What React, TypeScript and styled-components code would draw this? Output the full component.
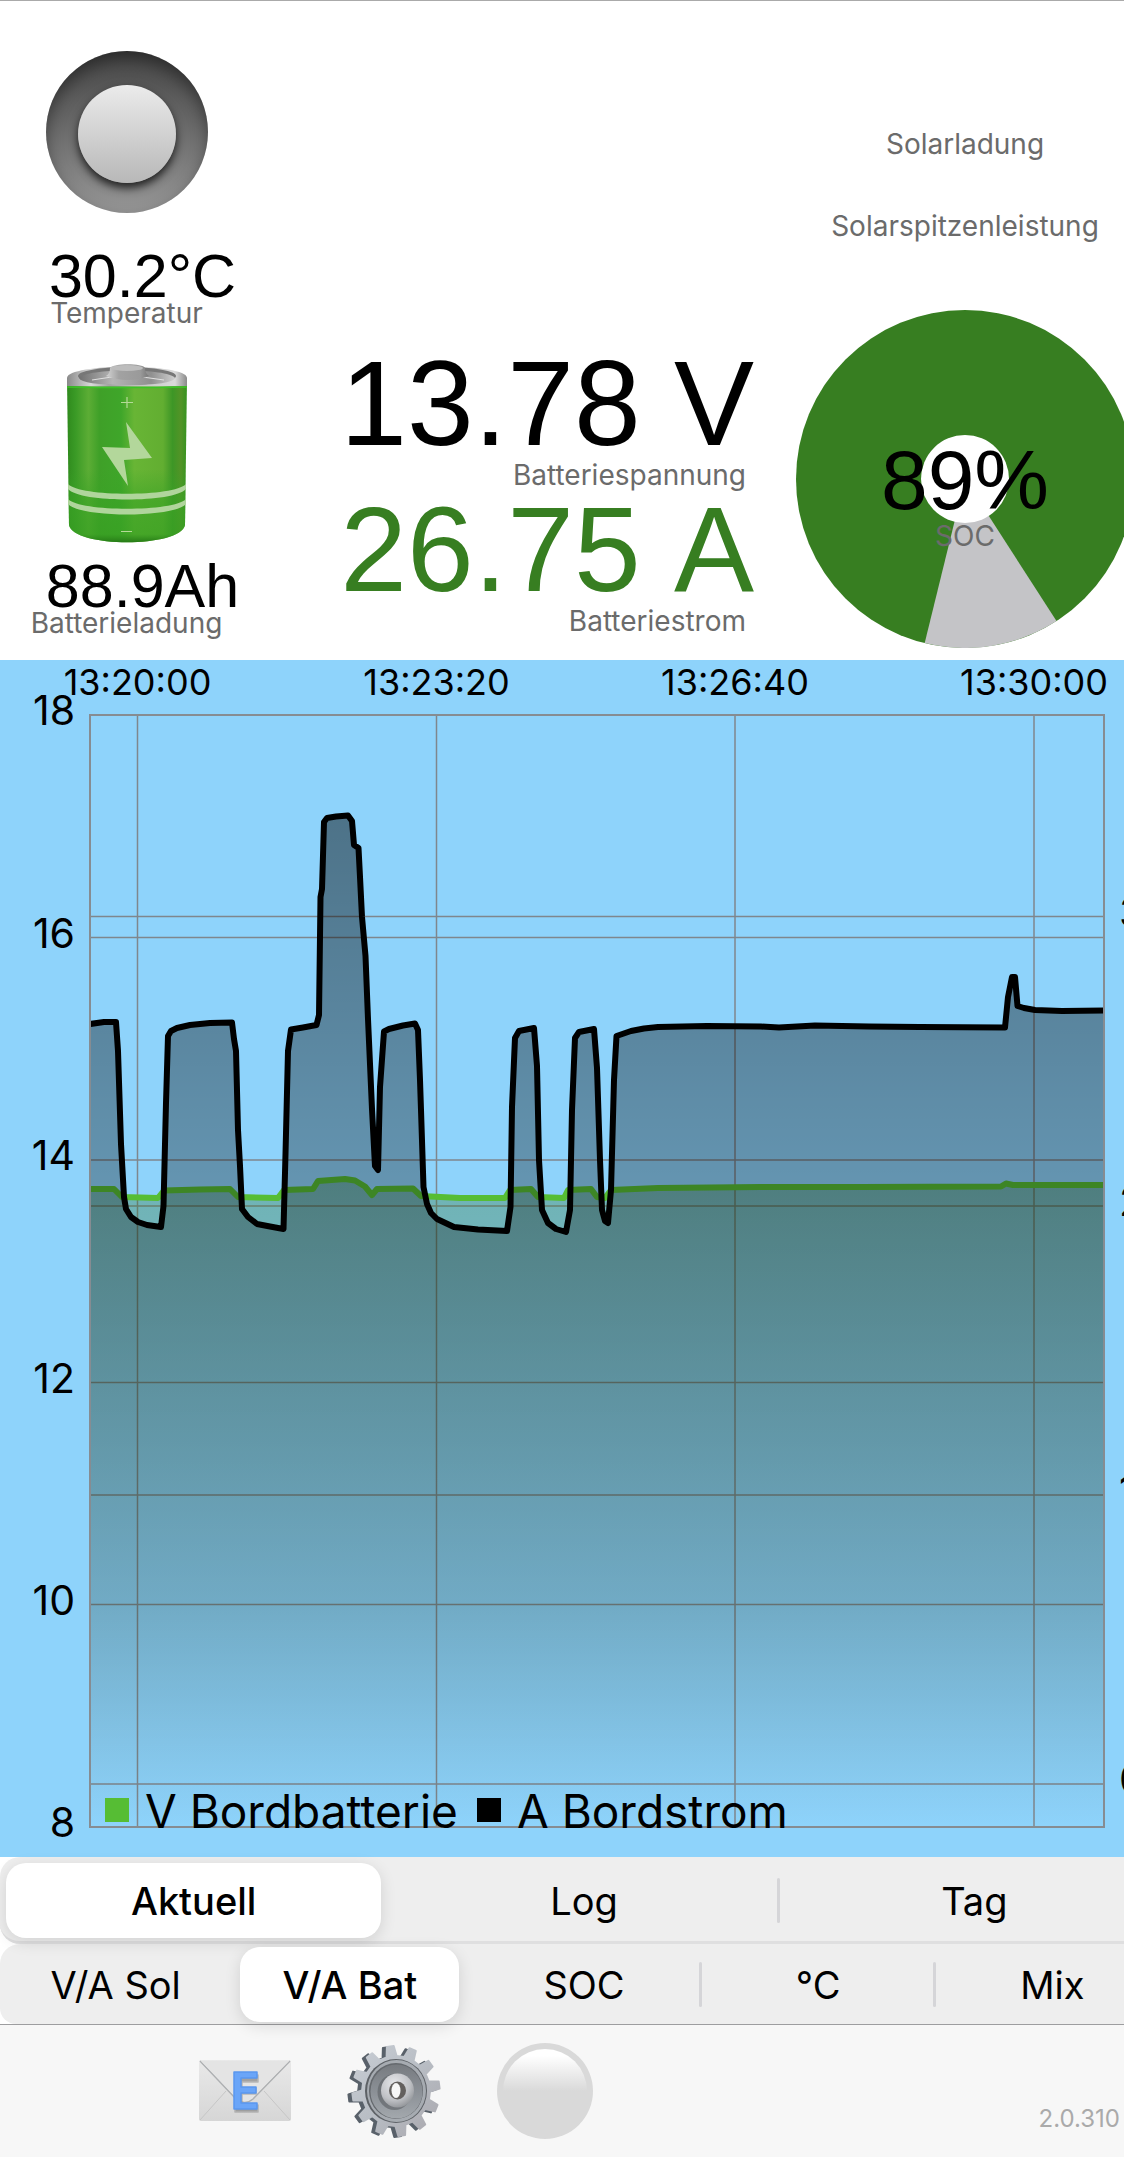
import React, { useState } from 'react';
import styled, { createGlobalStyle } from 'styled-components';

const GREEN = '#377e21';
const SKY = '#8ed3fb';
const UI_FONT = `Inter, Roboto, sans-serif`;
const VALUE_FONT = `"Liberation Sans", Arial, sans-serif`;

const GlobalStyle = createGlobalStyle`
  *, *::before, *::after { box-sizing: border-box; }
  body { margin: 0; background: #fff; color: #000; font-family: ${UI_FONT}; }
  button { font: inherit; color: inherit; border: 0; background: none; padding: 0; cursor: pointer; }
  svg { display: block; }
`;

const Page = styled.main`
  display: flex;
  flex-direction: column;
  width: 100%;
  overflow: hidden;
`;

/* ---------- instruments ---------- */

const Instruments = styled.header`
  display: grid;
  grid-template-columns: 253px 1fr 338px;
  margin-right: -10px;
  padding-bottom: 12px;
  border-top: 1px solid #aaa;
`;

const StatusColumn = styled.section`
  display: flex;
  flex-direction: column;
  align-items: center;
  padding-top: 50px;
`;

const BatteryColumn = styled.section`
  display: flex;
  flex-direction: column;
  align-items: flex-end;
  padding: 352px 42px 0 0;
`;

const SolarColumn = styled.section`
  display: flex;
  flex-direction: column;
  align-items: center;
  padding-top: 131px;
`;

const Caption = styled.span`
  font-size: 28px;
  line-height: 24px;
  color: #6b6b6b;
  white-space: nowrap;
`;

const MeterCaption = styled(Caption)`
  margin: 10px 8px 12px 0;
`;

const SolarCaption = styled(Caption)`
  margin-bottom: 58px;
`;

const SmallValue = styled.span`
  font-family: ${VALUE_FONT};
  font-size: 61px;
  line-height: 50px;
  font-kerning: none;
  padding-left: 32px;
  white-space: nowrap;
`;

const LargeValue = styled.span<{ $color?: string }>`
  font-family: ${VALUE_FONT};
  font-size: 120px;
  line-height: 100px;
  font-kerning: none;
  color: ${(p) => p.$color ?? '#000'};
  white-space: nowrap;
`;

const Lamp = styled.div`
  display: grid;
  place-items: center;
  width: 162px;
  height: 162px;
  margin-bottom: 38px;
  border-radius: 50%;
  background: linear-gradient(#464646, #6c6c6c 50%, #969696);
  box-shadow: inset 0 8px 16px rgba(0, 0, 0, 0.4);

  &::after {
    content: '';
    width: 98px;
    height: 98px;
    margin-top: 4px;
    border-radius: 50%;
    background: linear-gradient(#ebebeb, #b8b8b8);
    box-shadow: 0 5px 8px rgba(0, 0, 0, 0.75);
  }
`;

const BatteryFigure = styled.div`
  margin: 39px 0 17px;
`;

const Gauge = styled.div`
  display: grid;
  margin-top: 14px;

  > * {
    grid-area: 1 / 1;
  }
`;

const GaugeText = styled.div`
  display: flex;
  flex-direction: column;
  align-items: center;
  gap: 8px;
  padding-top: 134px;
`;

const GaugeValue = styled.span`
  font-family: ${VALUE_FONT};
  font-size: 84px;
  line-height: 72px;
`;

function Battery() {
  return (
    <svg width="122" height="180" viewBox="0 0 122 180" role="img" aria-label="Batterie">
      <defs>
        <linearGradient id="can" x1="0" x2="1" y1="0" y2="0">
          <stop offset="0" stopColor="#2f8a1d" />
          <stop offset="0.07" stopColor="#3a9a26" />
          <stop offset="0.18" stopColor="#5cad35" />
          <stop offset="0.27" stopColor="#3fa028" />
          <stop offset="0.45" stopColor="#3fa62a" />
          <stop offset="0.56" stopColor="#68b535" />
          <stop offset="0.8" stopColor="#62ae31" />
          <stop offset="0.88" stopColor="#3d9626" />
          <stop offset="0.95" stopColor="#539427" />
          <stop offset="1" stopColor="#35931f" />
        </linearGradient>
        <linearGradient id="canLow" x1="0" x2="0" y1="0" y2="1">
          <stop offset="0.55" stopColor="#3aa325" stopOpacity="0" />
          <stop offset="0.75" stopColor="#3aa325" stopOpacity="0.65" />
          <stop offset="0.95" stopColor="#37a022" stopOpacity="0.7" />
          <stop offset="1" stopColor="#267a16" />
        </linearGradient>
        <linearGradient id="rim" x1="0" x2="1" y1="0" y2="0">
          <stop offset="0" stopColor="#8a8a8a" />
          <stop offset="0.2" stopColor="#d9d9d9" />
          <stop offset="0.35" stopColor="#a4a4a4" />
          <stop offset="0.65" stopColor="#c9c9c9" />
          <stop offset="0.9" stopColor="#dadada" />
          <stop offset="1" stopColor="#8a8a8a" />
        </linearGradient>
        <linearGradient id="lid" x1="0" x2="1" y1="0" y2="0">
          <stop offset="0" stopColor="#707070" />
          <stop offset="0.35" stopColor="#b5b5b5" />
          <stop offset="0.75" stopColor="#8f8f8f" />
          <stop offset="1" stopColor="#cfcfcf" />
        </linearGradient>
        <linearGradient id="knob" x1="0" x2="1" y1="0" y2="0">
          <stop offset="0" stopColor="#d4d4d4" />
          <stop offset="0.3" stopColor="#a2a2a2" />
          <stop offset="0.8" stopColor="#9a9a9a" />
          <stop offset="1" stopColor="#777" />
        </linearGradient>
      </defs>
      <path d="M1 16 L3 161 C7 184 115 184 119 161 L121 16Z" fill="url(#can)" />
      <path d="M1 16 L3 161 C7 184 115 184 119 161 L121 16Z" fill="url(#canLow)" />
      <path d="M1 14 C1 -1 121 -1 121 14 V22 Q61 23 1 22Z" fill="url(#rim)" />
      <ellipse cx="61" cy="12" rx="49" ry="9" fill="#777" />
      <path d="M13 14 C20 4 102 4 109 14 Q106 21 61 21 Q16 21 13 14Z" fill="url(#lid)" />
      <path d="M26 16 Q60 9 98 16" fill="none" stroke="#e0e0e0" strokeWidth="1" />
      <path d="M40 12 Q44 10 44 4 C47 -1 77 -1 79 4 Q79 9 83 12 Q62 20 40 12Z" fill="url(#knob)" />
      <ellipse cx="61" cy="4" rx="16" ry="3" fill="#bdbdbd" />
      <path d="M1 23 Q61 24 121 23" fill="none" stroke="#3dc327" strokeWidth="1.5" />
      <path d="M55 38.5H67M61 33V44M55 167.5H66" stroke="#b5da98" strokeWidth="1.2" />
      <path d="M60 58 L86 94 L58 96 L62 122 L36 83 L64 84Z" fill="#b3d79b" />
      <path d="M2 120 C14 133 108 133 120 120 V125 C108 139 14 139 2 125Z" fill="#b0d59c" />
      <path d="M2 135 C14 148 108 148 120 135 V140 C108 154 14 154 2 140Z" fill="#b0d59c" />
    </svg>
  );
}

function ChargePie() {
  return (
    <svg width="338" height="338" viewBox="0 0 338 338" aria-hidden="true">
      <circle cx="169" cy="169" r="169" fill={GREEN} />
      <path d="M169 169 L128.7 333.1 A169 169 0 0 0 260.5 311.1Z" fill="#c4c4c7" />
      <circle cx="169" cy="169" r="44" fill="#fff" />
    </svg>
  );
}

/* ---------- chart ---------- */

type Point = [number, number];

const LEFT = 90;
const RIGHT = 1104;
const TOP = 715;
const BOTTOM = 1827;

const current: Point[] = [
  [90, 1024], [104, 1022], [116, 1022], [118, 1051], [121, 1144], [124, 1197], [126, 1209], [131, 1217],
  [138, 1222], [147, 1225], [161, 1227], [163.5, 1206], [166, 1103], [168, 1036], [171, 1031], [177, 1028],
  [190, 1025], [210, 1023], [232, 1022.5], [234, 1039], [236, 1051], [238, 1130], [240, 1166], [242, 1209],
  [248, 1217], [257, 1224], [270, 1226.5], [283.5, 1229], [285.5, 1154], [288, 1051], [291, 1029.5],
  [303, 1027.5], [316.5, 1025], [319, 1015], [320.5, 897], [322, 889], [324, 822], [327, 818],
  [336, 816.5], [348, 815.5], [352, 821], [354, 845], [358.5, 848], [360, 877], [362, 917], [365.5, 956],
  [368, 1019], [372, 1109], [375, 1166], [378, 1170], [380, 1087], [384, 1031.5], [389, 1029], [403, 1025.5],
  [415, 1023.5], [418, 1030], [420, 1080], [421, 1110], [423.5, 1187], [427, 1204], [431, 1213], [437, 1219],
  [454, 1227], [478, 1229.5], [507, 1231], [510.5, 1207], [512, 1107], [515, 1038], [519, 1031], [534, 1028],
  [537, 1066], [539, 1160], [542, 1210], [548, 1223], [556, 1229], [566, 1232], [570, 1210], [572, 1110],
  [575, 1038], [579, 1032], [594, 1029], [597, 1068], [600, 1160], [602, 1210], [605, 1221], [608, 1223],
  [611, 1190], [614, 1080], [616.5, 1036], [631, 1031], [644, 1028.5], [658, 1027], [707, 1026], [761, 1026.5],
  [779, 1027.5], [815, 1025.5], [869, 1026.5], [920, 1027], [1005, 1027.5], [1008, 997], [1012, 977],
  [1015, 977], [1017.5, 1006], [1024, 1008], [1035, 1010], [1062, 1011], [1104, 1010.5],
];

const voltage: Point[] = [
  [90, 1189], [114, 1189], [122, 1197], [158, 1198], [164, 1190.5], [200, 1189.5], [230, 1189], [238, 1197],
  [278, 1198], [284, 1190], [313, 1189], [318, 1181], [345, 1179], [355, 1180.5], [365, 1186.5], [372, 1195],
  [377, 1189], [413, 1188.5], [421, 1196], [460, 1198], [505, 1198], [510, 1190], [531, 1189], [538, 1197],
  [564, 1198], [568, 1190], [591, 1189], [597, 1197], [605, 1198], [611, 1190], [658, 1188], [761, 1187],
  [860, 1187], [1001, 1186.5], [1006, 1183.5], [1013, 1185], [1104, 1185],
];

const toPath = (points: Point[]) => 'M' + points.map((p) => p.join(' ')).join('L');
const toArea = (points: Point[]) => `${toPath(points)}L${RIGHT} ${BOTTOM}L${LEFT} ${BOTTOM}Z`;

const rowsLeft = [
  { y: 715, label: '18' },
  { y: 937.5, label: '16' },
  { y: 1160, label: '14' },
  { y: 1382.5, label: '12' },
  { y: 1604.5, label: '10' },
  { y: 1827, label: '8' },
];
const rowsRight = [
  { y: 916.5, label: '30' },
  { y: 1206, label: '20' },
  { y: 1495, label: '10' },
  { y: 1784, label: '0' },
];
const columns = [
  { x: 137.5, label: '13:20:00' },
  { x: 436.5, label: '13:23:20' },
  { x: 735, label: '13:26:40' },
  { x: 1034, label: '13:30:00' },
];

const ChartPanel = styled.section`
  background: ${SKY};
`;

const ChartSvg = styled.svg`
  width: 100%;
  height: auto;
  font-family: ${UI_FONT};
`;

const AxisText = styled.text`
  font-size: 41px;
`;

const TimeText = styled.text`
  font-size: 36px;
  text-anchor: middle;
`;

const LegendText = styled.text`
  font-size: 46px;
`;

function Chart() {
  return (
    <ChartPanel>
      <ChartSvg viewBox="0 660 1124 1197" role="img" aria-label="V Bordbatterie, A Bordstrom">
        <defs>
          <linearGradient id="currentFill" gradientUnits="userSpaceOnUse" x1="0" x2="0" y1="815" y2={BOTTOM}>
            <stop offset="0" stopColor="#000" stopOpacity="0.46" />
            <stop offset="0.4" stopColor="#000" stopOpacity="0.28" />
            <stop offset="0.78" stopColor="#000" stopOpacity="0.14" />
            <stop offset="1" stopColor="#000" stopOpacity="0" />
          </linearGradient>
          <linearGradient id="voltageFill" gradientUnits="userSpaceOnUse" x1="0" x2="0" y1="1179" y2={BOTTOM}>
            <stop offset="0" stopColor="#337328" stopOpacity="0.34" />
            <stop offset="1" stopColor="#336048" stopOpacity="0" />
          </linearGradient>
          <clipPath id="plot">
            <rect x={LEFT + 1} y={TOP} width={RIGHT - LEFT - 1} height={BOTTOM - TOP} />
          </clipPath>
        </defs>

        <g stroke="#7f868d" strokeWidth="1.5">
          {[...rowsLeft, ...rowsRight].map((r) => (
            <line key={r.y} x1={LEFT} x2={RIGHT} y1={r.y} y2={r.y} />
          ))}
          {columns.map((c) => (
            <line key={c.x} x1={c.x} x2={c.x} y1={TOP} y2={BOTTOM} />
          ))}
        </g>

        <g clipPath="url(#plot)" strokeLinejoin="round">
          <path d={toArea(voltage)} fill="url(#voltageFill)" />
          <path d={toPath(voltage)} fill="none" stroke="#56bd34" strokeWidth="6" />
          <path d={toArea(current)} fill="url(#currentFill)" />
          <path d={toPath(current)} fill="none" stroke="#000" strokeWidth="6" />
        </g>
        <rect x={LEFT} y={TOP} width={RIGHT - LEFT} height={BOTTOM - TOP} fill="none" stroke="#868c92" strokeWidth="2" />

        {columns.map((c) => (
          <TimeText key={c.x} x={c.x} y="695">{c.label}</TimeText>
        ))}
        {rowsLeft.map((r) => (
          <AxisText key={r.y} x="75" y={r.y + 10} textAnchor="end">{r.label}</AxisText>
        ))}
        {rowsRight.map((r) => (
          <AxisText key={r.y} x="1119" y={r.y + 10}>{r.label}</AxisText>
        ))}

        <rect x="105" y="1798" width="24" height="24" fill="#56bd34" />
        <LegendText x="145" y="1828">V Bordbatterie</LegendText>
        <rect x="477" y="1798" width="24" height="24" />
        <LegendText x="517" y="1828">A Bordstrom</LegendText>
      </ChartSvg>
    </ChartPanel>
  );
}

/* ---------- segmented controls ---------- */

const Segments = styled.div<{ $count: number; $line?: boolean }>`
  display: grid;
  grid-template-columns: repeat(${(p) => p.$count}, 1fr);
  column-gap: 15px;
  width: calc(100% + 44px);
  padding: ${(p) => (p.$line ? '6px 6px 3px' : '3px 6px 2px')};
  background: #eee;
  border-radius: 20px 0 0 ${(p) => (p.$line ? 20 : 16)}px;
  border-bottom: ${(p) => (p.$line ? '3px solid #dfdfe0' : '0')};
`;

const Segment = styled.button<{ $active: boolean; $divider: boolean }>`
  position: relative;
  height: 75px;
  border-radius: 20px;
  font-size: 38px;
  line-height: 48px;
  font-weight: ${(p) => (p.$active ? 500 : 400)};
  background: ${(p) => (p.$active ? '#fff' : 'transparent')};
  box-shadow: ${(p) => (p.$active ? '0 4px 16px rgba(0, 0, 0, 0.12)' : 'none')};

  &::after {
    content: '';
    display: ${(p) => (p.$divider ? 'block' : 'none')};
    position: absolute;
    top: 15px;
    right: -8px;
    width: 3px;
    height: 45px;
    border-radius: 2px;
    background: #d5d5d8;
  }
`;

function SegmentedControl({ items, initial, line }: { items: string[]; initial: number; line?: boolean }) {
  const [active, setActive] = useState(initial);
  return (
    <Segments $count={items.length} $line={line} role="group">
      {items.map((item, i) => (
        <Segment
          key={item}
          type="button"
          aria-pressed={i === active}
          $active={i === active}
          $divider={i < items.length - 1 && i !== active && i + 1 !== active}
          onClick={() => setActive(i)}
        >
          {item}
        </Segment>
      ))}
    </Segments>
  );
}

/* ---------- toolbar ---------- */

const Toolbar = styled.footer`
  display: flex;
  align-items: center;
  gap: 55px;
  height: 133px;
  padding: 0 4px 0 199px;
  border-top: 1px solid #9d9d9f;
  background: #f7f7f7;
`;

const ToolButton = styled.button`
  flex: none;
`;

const RoundButton = styled.button`
  flex: none;
  width: 96px;
  height: 96px;
  padding: 6px;
  border-radius: 50%;
  background: #d9d9d9;

  &::before {
    content: '';
    display: block;
    width: 84px;
    height: 84px;
    border-radius: 50%;
    background: linear-gradient(#fff 8%, #d9d9d9 50%);
  }
`;

const Version = styled.span`
  align-self: flex-end;
  margin-left: auto;
  padding-bottom: 24px;
  font-size: 24px;
  line-height: 28px;
  color: #aaa;
`;

function Envelope() {
  return (
    <svg width="92" height="62" viewBox="0 0 92 62">
      <defs>
        <linearGradient id="paper" x1="0" x2="0" y1="0" y2="1">
          <stop offset="0" stopColor="#e9e9e9" />
          <stop offset="1" stopColor="#d6d6d6" />
        </linearGradient>
      </defs>
      <rect width="92" height="61" rx="2" fill="url(#paper)" />
      <path d="M1 60 L27 31 M91 60 L65 31" stroke="#c6c6c6" strokeWidth="1" />
      <path d="M1 1 L37 39 Q46 46 54 39 L91 1" fill="#e6e6e6" stroke="#aeb0b2" strokeWidth="1.5" />
      <path d="M2 1 L37 37 Q46 44 54 37 L90 1" fill="#e4e4e4" />
      <g strokeLinejoin="round" strokeWidth="1.5">
        <path d="M36 15H59V22H43V28H57V34H43V45H59V52H36Z" fill="#777" stroke="#999" opacity="0.6" />
        <path d="M35 12H58V18H42V27H57V33H42V43H58V49H35Z" fill="#6aa5f8" stroke="#5a97ee" />
      </g>
    </svg>
  );
}

const gearOutline = (() => {
  const parts: string[] = [];
  for (let i = 0; i < 12; i += 1) {
    const middle = -97 + i * 30;
    const steps: Point[] = [[-9, 35], [-5, 45], [4, 45], [8, 35]];
    steps.forEach(([offset, radius]) => {
      const a = ((middle + offset) * Math.PI) / 180;
      parts.push(`${(Math.cos(a) * radius * 0.97).toFixed(1)} ${(Math.sin(a) * radius).toFixed(1)}`);
    });
  }
  return `M${parts.join('L')}Z`;
})();

function Gear() {
  return (
    <svg width="96" height="96" viewBox="0 0 96 96">
      <defs>
        <linearGradient id="steel" x1="0" x2="1" y1="0" y2="1">
          <stop offset="0" stopColor="#c9ced5" />
          <stop offset="0.5" stopColor="#b8bdc4" />
          <stop offset="1" stopColor="#a9a7ad" />
        </linearGradient>
        <linearGradient id="dish" x1="0" x2="0" y1="0" y2="1">
          <stop offset="0" stopColor="#777b80" />
          <stop offset="0.5" stopColor="#8b9096" />
          <stop offset="1" stopColor="#a3a8ad" />
        </linearGradient>
        <radialGradient id="hub" cx="0.4" cy="0.3" r="0.8">
          <stop offset="0" stopColor="#e6e7ea" />
          <stop offset="0.6" stopColor="#bfc1c5" />
          <stop offset="1" stopColor="#85888c" />
        </radialGradient>
      </defs>
      <g strokeLinejoin="round" strokeWidth="2">
        <path d={gearOutline} transform="translate(46 49)" fill="#59616a" stroke="#59616a" />
        <path d={gearOutline} transform="translate(50 48)" fill="url(#steel)" stroke="url(#steel)" />
      </g>
      <ellipse cx="50" cy="48" rx="31" ry="32" fill="#5d6166" />
      <ellipse cx="50.5" cy="48" rx="29.5" ry="31" fill="#a6abb1" />
      <ellipse cx="50" cy="48" rx="27" ry="28" fill="#65696e" />
      <ellipse cx="50.5" cy="48.5" rx="26" ry="27" fill="url(#dish)" />
      <ellipse cx="48.5" cy="49" rx="17" ry="18" fill="#62666b" opacity="0.7" />
      <ellipse cx="51.5" cy="47.5" rx="16.5" ry="17" fill="url(#hub)" />
      <ellipse cx="51.5" cy="47.5" rx="8.5" ry="9" fill="#63605e" />
      <ellipse cx="50" cy="47.5" rx="4.5" ry="7.5" fill="#f7f7f7" />
    </svg>
  );
}

export default function App() {
  return (
    <Page>
      <GlobalStyle />
      <Instruments>
        <StatusColumn>
          <Lamp />
          <SmallValue>30.2°C</SmallValue>
          <Caption>Temperatur</Caption>
          <BatteryFigure>
            <Battery />
          </BatteryFigure>
          <SmallValue>88.9Ah</SmallValue>
          <Caption>Batterieladung</Caption>
        </StatusColumn>
        <BatteryColumn>
          <LargeValue>13.78 V</LargeValue>
          <MeterCaption>Batteriespannung</MeterCaption>
          <LargeValue $color={GREEN}>26.75 A</LargeValue>
          <MeterCaption>Batteriestrom</MeterCaption>
        </BatteryColumn>
        <SolarColumn>
          <SolarCaption>Solarladung</SolarCaption>
          <SolarCaption>Solarspitzenleistung</SolarCaption>
          <Gauge>
            <ChargePie />
            <GaugeText>
              <GaugeValue>89%</GaugeValue>
              <Caption>SOC</Caption>
            </GaugeText>
          </Gauge>
        </SolarColumn>
      </Instruments>

      <Chart />

      <SegmentedControl items={['Aktuell', 'Log', 'Tag']} initial={0} line />
      <SegmentedControl items={['V/A Sol', 'V/A Bat', 'SOC', '°C', 'Mix']} initial={1} />

      <Toolbar>
        <ToolButton type="button" aria-label="E-Mail">
          <Envelope />
        </ToolButton>
        <ToolButton type="button" aria-label="Einstellungen">
          <Gear />
        </ToolButton>
        <RoundButton type="button" aria-label="Status" />
        <Version>2.0.310</Version>
      </Toolbar>
    </Page>
  );
}
